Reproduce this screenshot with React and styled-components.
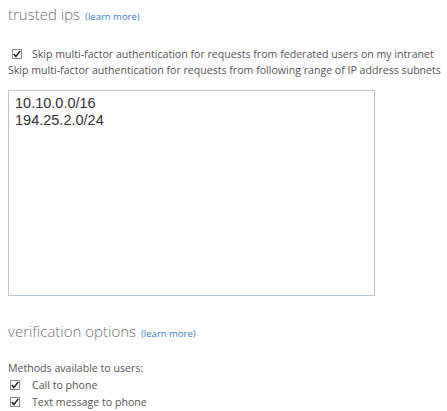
import React from 'react'
import styled, { createGlobalStyle } from 'styled-components'

const GlobalStyle = createGlobalStyle`
  html, body {
    margin: 0;
    padding: 0;
    background: #ffffff;
  }
  body {
    font-family: "Open Sans", "Noto Sans", sans-serif;
    color: #555555;
  }
`

const Page = styled.div`
  width: 447px;
  height: 411px;
  padding: 4px 0 0 8px;
  box-sizing: border-box;
  overflow: hidden;
  display: flex;
  flex-direction: column;
`

const Heading = styled.h2`
  margin: ${p => p.top || 0}px 0 0;
  font-size: 15px;
  font-weight: 300;
  color: #727272;
  line-height: 20px;
  display: flex;
  align-items: baseline;
  gap: 5px;
  white-space: nowrap;
`

const LearnMore = styled.a`
  font-size: 9.5px;
  color: #3b7fc6;
  text-decoration: none;
  font-weight: 400;
`

const CheckRow = styled.label`
  display: flex;
  align-items: center;
  gap: ${p => p.gap}px;
  font-size: 10.6px;
  color: #555;
  height: ${p => p.h}px;
  margin: ${p => p.top || 0}px 0 0 ${p => p.indent || 0}px;
  white-space: nowrap;
`

const Box = styled.span`
  width: 8px;
  height: 8px;
  border: 1px solid #8c8c8c;
  background: #fff;
  display: flex;
  align-items: center;
  justify-content: center;
  flex-shrink: 0;
`

const Text = styled.div`
  font-size: 10.6px;
  color: #555;
  line-height: 16px;
  white-space: nowrap;
  margin: ${p => p.top || 0}px 0 ${p => p.bottom || 0}px;
`

const IpList = styled.textarea`
  width: 367px;
  height: 206px;
  margin: 0;
  padding: 4px 6px;
  box-sizing: border-box;
  border: 1px solid #b9c6d3;
  font-family: "Liberation Sans", Arial, sans-serif;
  font-size: 14.5px;
  line-height: 17px;
  color: #333;
  resize: none;
  outline: none;
`

const Check = ({ children, indent, gap, h, top }) => (
  <CheckRow indent={indent} gap={gap} h={h} top={top}>
    <Box>
      <svg width="8" height="8" viewBox="0 0 8 8">
        <path d="M0.8 4.1 L2.9 6.5 L7.3 0.9" fill="none" stroke="#222" strokeWidth="1.5" />
      </svg>
    </Box>
    {children}
  </CheckRow>
)

export default function App() {
  return (
    <>
      <GlobalStyle />
      <Page>
        <Heading>
          trusted ips <LearnMore href="#">(learn more)</LearnMore>
        </Heading>
        <Check indent={4} gap={10} h={16} top={19}>
          Skip multi-factor authentication for requests from federated users on my intranet
        </Check>
        <Text bottom={12}>
          Skip multi-factor authentication for requests from following range of IP address subnets
        </Text>
        <IpList defaultValue={'10.10.0.0/16\n194.25.2.0/24'} />
        <Heading top={25}>
          verification options <LearnMore href="#">(learn more)</LearnMore>
        </Heading>
        <Text top={16}>Methods available to users:</Text>
        <Check indent={2} gap={12} h={17}>Call to phone</Check>
        <Check indent={2} gap={12} h={17}>Text message to phone</Check>
      </Page>
    </>
  )
}
